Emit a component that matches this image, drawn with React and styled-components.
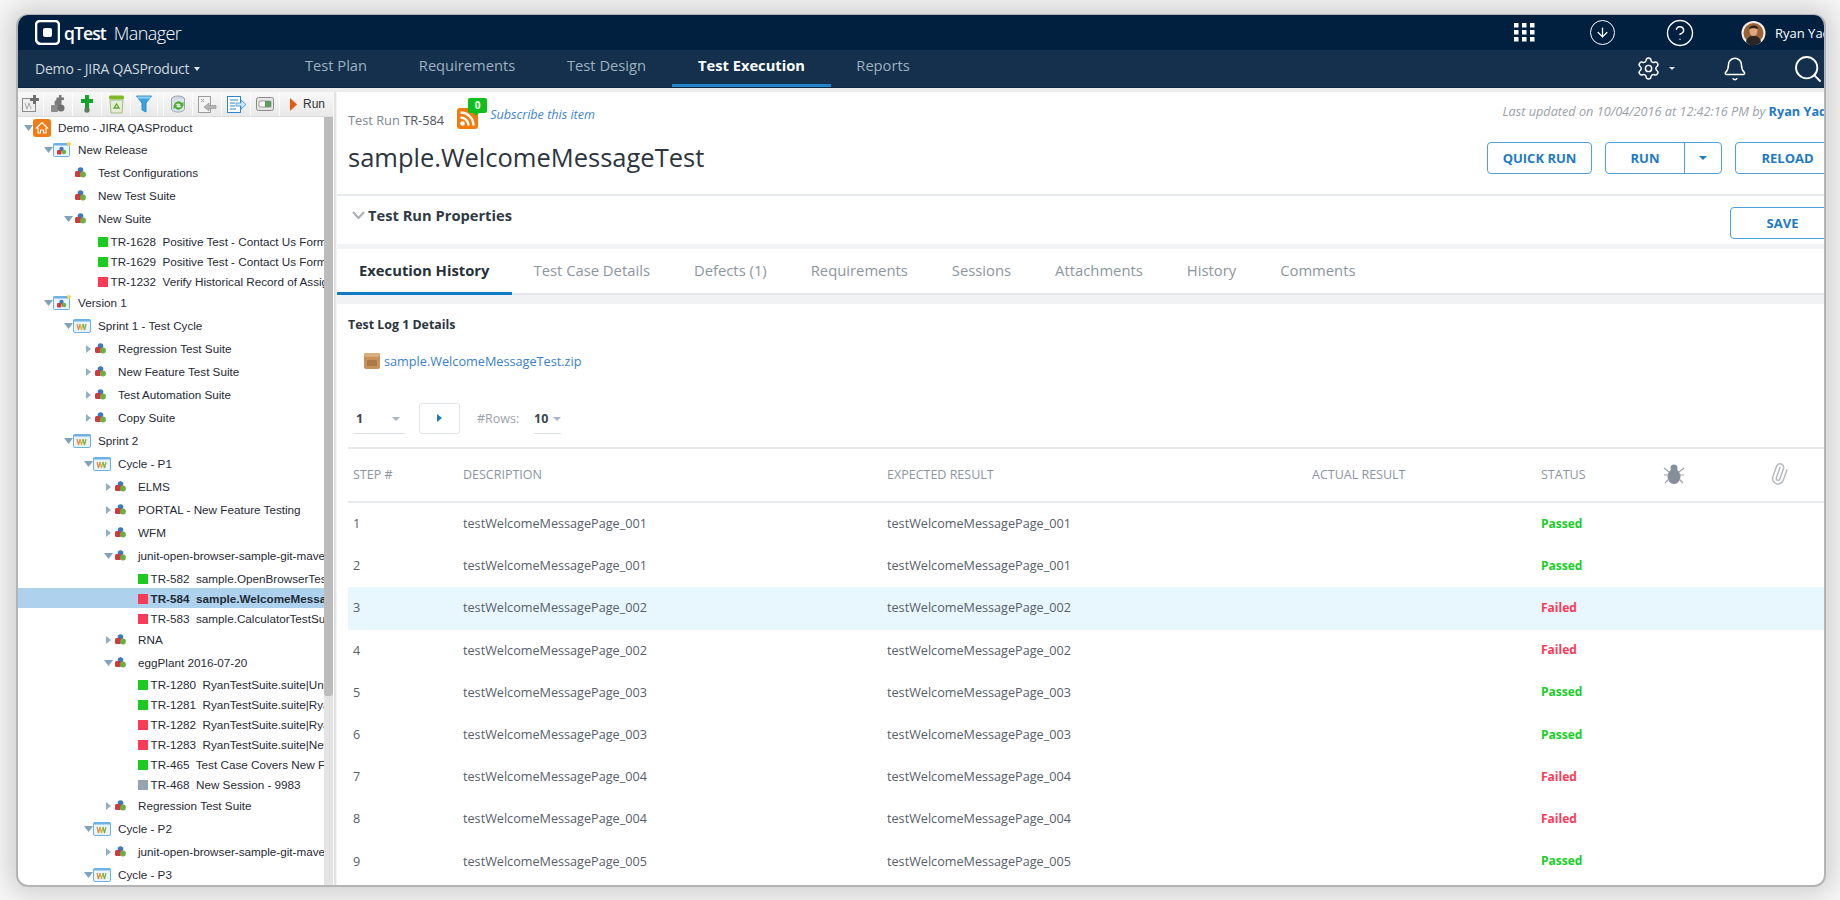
import React from "react";
import styled, { createGlobalStyle } from "styled-components";
import { Settings, Bell, Search, CircleHelp, ArrowDown, Paperclip } from "lucide-react";

const GlobalStyle = createGlobalStyle`
  html, body { margin: 0; padding: 0; background: #fff; }
  * { box-sizing: border-box; }
`;

const OPEN = `"Open Sans", "Liberation Sans", sans-serif`;
const ARIAL = `"Liberation Sans", Arial, sans-serif`;

const Page = styled.div`
  width: 1840px;
  height: 900px;
  padding: 14px 14px 13px 16px;
  overflow: hidden;
  background: #f6f6f6;
  font-family: ${OPEN};
`;

const Frame = styled.div`
  height: 100%;
  display: flex;
  flex-direction: column;
  overflow: hidden;
  background: #fff;
  border: 2px solid #b4b4b4;
  border-top-width: 1px;
  border-radius: 12px;
  box-shadow: 0 0 26px 6px rgba(0, 0, 0, 0.17);
`;

const TopBar = styled.div`
  flex: 0 0 35px;
  display: flex;
  align-items: center;
  padding-left: 17px;
  background: #011f3f;
  color: #fff;
`;

const Brand = styled.div`
  flex: 0 0 1479px;
  display: flex;
  align-items: center;
`;

const BrandName = styled.span`
  margin-left: 4px;
  font-size: 17.5px;
  font-weight: 600;
  letter-spacing: -0.9px;
`;

const BrandProduct = styled.span`
  margin-left: 8px;
  font-size: 18px;
  font-weight: 300;
  letter-spacing: -0.6px;
`;

const TopIcons = styled.div`
  display: flex;
  align-items: center;
`;

const TopIcon = styled.div`
  flex: 0 0 ${(p) => p.$w}px;
  display: flex;
  align-items: center;
  margin-left: ${(p) => p.$ml || 0}px;
`;

const RoundIcon = styled.div`
  width: 25px;
  height: 25px;
  border: 1.5px solid #fff;
  border-radius: 50%;
  display: flex;
  align-items: center;
  justify-content: center;
`;

const UserName = styled.span`
  margin-left: 9px;
  font-size: 13px;
  white-space: nowrap;
`;

const NavBar = styled.div`
  flex: 0 0 38px;
  display: flex;
  align-items: stretch;
  padding-left: 17px;
  background: #14304d;
  border-bottom: 1px solid #0d2842;
`;

const ProjectPicker = styled.div`
  flex: 0 0 236px;
  display: flex;
  align-items: center;
  gap: 5px;
  font-size: 14px;
  letter-spacing: -0.2px;
  color: #cdd6de;
`;

const Caret = styled.span`
  display: inline-block;
  width: 0;
  height: 0;
  border-left: ${(p) => p.$size || 3.5}px solid transparent;
  border-right: ${(p) => p.$size || 3.5}px solid transparent;
  border-top: ${(p) => p.$size || 4}px solid ${(p) => p.$color || "#dfe5ea"};
`;

const NavLink = styled.div`
  flex: 0 0 ${(p) => p.$w}px;
  display: flex;
  align-items: center;
  justify-content: center;
  padding: 0 0 5px ${(p) => p.$shift || 0}px;
  font-size: 14.7px;
  font-weight: ${(p) => (p.$active ? 700 : 400)};
  color: ${(p) => (p.$active ? "#fff" : "#9fb0bf")};
  border-bottom: 3px solid ${(p) => (p.$active ? "#2183c9" : "transparent")};
`;

const NavRight = styled.div`
  margin-left: auto;
  flex: 0 0 188px;
  display: flex;
  align-items: center;
  color: #fff;
  overflow: hidden;
`;

const NavGap = styled.span`
  flex: 0 0 ${(p) => p.$w}px;
`;

const NavSearch = styled(Search)`
  flex-shrink: 0;
`;

const Gutter = styled.div`
  flex: 0 0 4px;
  background: #ececec;
`;

const Body = styled.div`
  flex: 1;
  min-height: 0;
  display: flex;
`;

const LeftPanel = styled.div`
  flex: 0 0 315px;
  width: 315px;
  min-width: 0;
  display: flex;
  flex-direction: column;
  min-height: 0;
`;

const Toolbar = styled.div`
  flex: 0 0 25px;
  display: flex;
  background: linear-gradient(#f8f8f8, #e9e9e9);
  border-bottom: 1px solid #dcdcdc;
`;

const ToolButton = styled.div`
  flex: 0 0 ${(p) => p.$w}px;
  display: flex;
  align-items: center;
  justify-content: center;
  gap: 6px;
  margin-left: ${(p) => p.$gap || 0}px;
  border-right: 1px solid #fcfcfc;
  border-left: ${(p) => (p.$gap ? "1px solid #fcfcfc" : "0")};
  font: 12px ${ARIAL};
  color: #333;
`;

const RunButton = styled(ToolButton)`
  justify-content: flex-start;
  padding-left: 10px;
  border-right: 0;
`;

const TreeArea = styled.div`
  flex: 1;
  min-height: 0;
  display: flex;
`;

const Tree = styled.div`
  flex: 1;
  min-width: 0;
  overflow: hidden;
`;

const TreeRow = styled.div`
  height: ${(p) => p.$h}px;
  margin-top: ${(p) => p.$mt || 0}px;
  display: flex;
  align-items: center;
  padding-left: ${(p) => 5 + p.$depth * 20}px;
  background: ${(p) => (p.$selected ? "#aed2ee" : "transparent")};
  font: ${(p) => (p.$selected ? 700 : 400)} 11.7px ${ARIAL};
  color: #1f2a36;
  white-space: pre;
  overflow: hidden;
`;

const TwistySlot = styled.span`
  flex: 0 0 10px;
  display: flex;
  justify-content: center;
`;

const IconSlot = styled.span`
  flex: 0 0 25px;
  display: flex;
  align-items: center;
  padding-left: ${(p) => p.$pad || 0}px;
`;

const StatusDot = styled.span`
  flex: 0 0 10px;
  height: 10px;
  margin-right: 2.5px;
  margin-top: 1px;
  background: ${(p) => p.$color};
`;

const ScrollTrack = styled.div`
  flex: 0 0 9px;
  background: #e4e4e4;
`;

const ScrollThumb = styled.div`
  height: 579px;
  background: #bcbcbc;
  border-radius: 0 0 3px 3px;
`;

const Splitter = styled.div`
  flex: 0 0 4px;
  background: #e2e2e2;
  border-left: 1px solid #fafafa;
  border-right: 1px solid #f2f2f2;
`;

const Main = styled.div`
  flex: 1;
  min-width: 0;
  overflow: hidden;
`;

const MainInner = styled.div`
  width: 1520px;
`;

const ItemHeader = styled.div`
  height: 104px;
  padding: 11px 0 0 11px;
  border-bottom: 2px solid #e6eaee;
`;

const MetaRow = styled.div`
  display: flex;
  justify-content: space-between;
  height: 36px;
  padding-right: 15px;
`;

const MetaLeft = styled.div`
  display: flex;
  align-items: flex-start;
  padding-top: 9px;
  font-size: 12.8px;
  line-height: 17px;
  color: #7d8791;
`;

const RunId = styled.span`
  color: #4d5661;
`;

const RssWrap = styled.span`
  position: relative;
  width: 21px;
  height: 21px;
  margin: -4px 0 0 13px;
`;

const CountBadge = styled.span`
  position: absolute;
  left: 11px;
  top: -10px;
  width: 19px;
  height: 15px;
  border-radius: 2px;
  background: #0fc01c;
  color: #fff;
  font-size: 10px;
  font-weight: 700;
  line-height: 15px;
  text-align: center;
  &::after {
    content: "";
    position: absolute;
    left: 5px;
    bottom: -3px;
    border-left: 3px solid transparent;
    border-right: 3px solid transparent;
    border-top: 3px solid #0fc01c;
  }
`;

const Subscribe = styled.span`
  margin: -6px 0 0 12px;
  font-size: 12.6px;
  font-style: italic;
  color: #3f86cf;
`;

const Updated = styled.div`
  font-size: 12.7px;
  line-height: 17px;
  font-style: italic;
  color: #9aa1a8;
  white-space: nowrap;
  b {
    color: #1f7ac4;
    font-style: normal;
    font-weight: 700;
  }
`;

const TitleRow = styled.div`
  display: flex;
  justify-content: space-between;
  align-items: flex-start;
  padding-right: 17px;
`;

const Title = styled.h1`
  margin: 1px 0 0;
  font-size: 25.5px;
  font-weight: 400;
  line-height: 34px;
  color: #2c3540;
`;

const Actions = styled.div`
  display: flex;
  gap: 13px;
  margin-top: 3px;
`;

const OutlineButton = styled.div`
  flex: 0 0 ${(p) => p.$w}px;
  height: 32px;
  display: flex;
  align-items: center;
  justify-content: center;
  border: 1px solid #4f9fdb;
  border-radius: 4px;
  background: #fff;
  color: #1f7ac4;
  font-size: 13px;
  font-weight: 700;
`;

const SplitPart = styled.span`
  flex: 0 0 ${(p) => p.$w}px;
  height: 100%;
  display: flex;
  align-items: center;
  justify-content: center;
  border-left: ${(p) => (p.$line ? "1px solid #4f9fdb" : "0")};
`;

const Props = styled.div`
  height: 48px;
  display: flex;
  justify-content: space-between;
  padding: 11px 22px 0 15px;
`;

const PropsTitle = styled.div`
  display: flex;
  align-items: center;
  height: 16px;
  gap: 3px;
  font-size: 14.7px;
  font-weight: 700;
  color: #303a45;
`;

const Band = styled.div`
  height: ${(p) => p.$h}px;
  background: #f1f2f3;
`;

const Tabs = styled.div`
  height: 46px;
  display: flex;
  border-bottom: 2px solid #e3e8ec;
`;

const Tab = styled.div`
  height: 46px;
  display: flex;
  align-items: center;
  padding: 0 22px 1px;
  border-bottom: 3px solid ${(p) => (p.$active ? "#1279c5" : "transparent")};
  font-size: 14.8px;
  font-weight: ${(p) => (p.$active ? 700 : 400)};
  color: ${(p) => (p.$active ? "#26313c" : "#8b96a1")};
`;

const LogBody = styled.div`
  padding: 12px 0 0 11px;
`;

const LogTitle = styled.div`
  font-size: 12.4px;
  line-height: 18px;
  font-weight: 700;
  color: #2b3540;
`;

const Attachment = styled.div`
  display: flex;
  align-items: center;
  gap: 4px;
  margin: 18px 0 0 16px;
  height: 18px;
  font-size: 12.7px;
  color: #3b7fc9;
`;

const Pager = styled.div`
  display: flex;
  align-items: center;
  height: 32px;
  margin: 32px 0 0 5px;
`;

const PageSelect = styled.div`
  flex: 0 0 ${(p) => p.$w}px;
  height: 30px;
  margin-top: 2px;
  display: flex;
  align-items: center;
  justify-content: space-between;
  padding: 0 ${(p) => p.$pr}px 0 ${(p) => p.$pl}px;
  border-bottom: 1px solid #dde2e7;
  font-size: 12.5px;
  font-weight: 700;
  color: #3a4450;
`;

const NextButton = styled.div`
  flex: 0 0 41px;
  height: 31px;
  margin-left: 14px;
  display: flex;
  align-items: center;
  justify-content: center;
  border: 1px solid #dfe4e9;
  border-radius: 3px;
`;

const RowsLabel = styled.span`
  flex: 0 0 57px;
  margin-left: 17px;
  font-size: 12.5px;
  color: #9aa3ac;
`;

const TableHead = styled.div`
  display: grid;
  grid-template-columns: 110px 424px 425px 229px 83px 100px 109px;
  align-items: center;
  height: 56px;
  margin-top: 13px;
  padding: 0 0 2px 5px;
  border-top: 2px solid #e6eaee;
  border-bottom: 2px solid #e6eaee;
  font-size: 12.5px;
  color: #8a96a3;
`;

const TableRow = styled.div`
  display: grid;
  grid-template-columns: 110px 424px 425px 229px 83px 100px 109px;
  align-items: center;
  height: 42.2px;
  padding: 0 0 2px 5px;
  background: ${(p) => (p.$highlight ? "#e8f6fd" : "transparent")};
  font-size: 12.65px;
  color: #56606b;
`;

const StatusText = styled.span`
  font-size: 12px;
  font-weight: 700;
  color: ${(p) => (p.$failed ? "#fb3a57" : "#16cf25")};
`;

const HeadIcon = styled.span`
  display: flex;
  justify-content: center;
  color: #8a949e;
`;

const ClipIcon = styled(Paperclip)`
  transform: rotate(-25deg);
`;

const LogoIcon = () => (
  <svg width="25" height="25" viewBox="0 0 25 25">
    <path d="M5 1h15a4 4 0 0 1 4 4v15a4 4 0 0 1-4 4H6a5 5 0 0 1-5-5V5a4 4 0 0 1 4-4z" fill="none" stroke="#fff" strokeWidth="2.6" />
    <rect x="8" y="8" width="9" height="9" rx="2" fill="#fff" />
  </svg>
);

const GridIcon = () => (
  <svg width="21" height="19" viewBox="0 0 21 19" fill="#fff">
    {[0, 8, 16].map((x) =>
      [0, 7, 14].map((y) => <rect key={`${x}-${y}`} x={x} y={y} width="4.5" height="4.5" />)
    )}
  </svg>
);

const Avatar = () => (
  <svg width="25" height="26" viewBox="0 0 25 26">
    <circle cx="12.5" cy="13" r="12" fill="#f4efe9" />
    <circle cx="12.5" cy="13" r="10" fill="#9b6236" />
    <path d="M5 22c1-5 4-6 7.500-6s6.500 1 7.500 6a10 10 0 0 1-15 0z" fill="#2a2624" />
    <ellipse cx="12.500" cy="11" rx="4" ry="5" fill="#dca783" />
    <path d="M8 9c0-4 9-5 9 0-2-1-7-1-9 0z" fill="#2c211b" />
  </svg>
);

const Twisty = ({ open }) =>
  open ? (
    <svg width="9" height="6" viewBox="0 0 9 6"><path d="M0 0h9L4.500 6z" fill="#7fa3bd" /></svg>
  ) : (
    <svg width="5" height="8" viewBox="0 0 5 8"><path d="M0 0l5 4-5 4z" fill="#8fb0c6" /></svg>
  );

const HomeIcon = () => (
  <svg width="18" height="18" viewBox="0 0 18 18">
    <rect width="18" height="18" rx="3" fill="#ee7d16" />
    <path d="M9 3.500L3.500 9H5v5h2.500v-3h3v3H13V9h1.500z" fill="none" stroke="#fff" strokeWidth="1.1" />
  </svg>
);

const SuiteIcon = () => (
  <svg width="11" height="11" viewBox="0 0 11 11">
    <circle cx="5.500" cy="3" r="2.800" fill="#3d79bb" />
    <rect x="0" y="4" width="6" height="6" rx="1.500" fill="#cf3a40" />
    <circle cx="8" cy="7.500" r="2.900" fill="#6bb043" />
  </svg>
);

const ReleaseIcon = () => (
  <svg width="18" height="15" viewBox="0 0 18 15">
    <rect x="0.500" y="1.500" width="16" height="13" rx="1" fill="#eaf4fc" stroke="#6db2e6" />
    <rect x="0.500" y="1.500" width="16" height="2" fill="#6db2e6" />
    <circle cx="8.500" cy="7" r="2.200" fill="#3d79bb" />
    <rect x="4" y="8" width="4.500" height="4.500" rx="1" fill="#cf3a40" />
    <circle cx="11" cy="10" r="2.300" fill="#6bb043" />
    <circle cx="16" cy="2" r="2" fill="#f2d64b" />
  </svg>
);

const CycleIcon = () => (
  <svg width="18" height="14" viewBox="0 0 18 14">
    <rect x="0.500" y="0.500" width="17" height="13" rx="1.500" fill="#eaf4fc" stroke="#6db2e6" />
    <rect x="0.500" y="0.500" width="17" height="2" fill="#6db2e6" />
    <path d="M4 5l1.500 6L7 5" fill="none" stroke="#e2894d" strokeWidth="1.200" />
    <path d="M7 5l1.500 6L10 5" fill="none" stroke="#d8b340" strokeWidth="1.200" />
    <path d="M10 5l1.500 6L13 5" fill="none" stroke="#74b24c" strokeWidth="1.200" />
  </svg>
);

const ToolCycle = () => (
  <svg width="17" height="18" viewBox="0 0 17 18">
    <rect x="0.500" y="3.500" width="13" height="13" fill="#eee" stroke="#8c8c8c" />
    <path d="M3 8l2 6 2-6 2 6" fill="none" stroke="#aaa" />
    <path d="M11 0h3v3h3v3h-3v3h-3V6H8V3h3z" fill="#6f6f6f" />
  </svg>
);

const ToolSuite = () => (
  <svg width="16" height="18" viewBox="0 0 16 18">
    <circle cx="8" cy="8" r="3.500" fill="#7b7b7b" />
    <rect x="1" y="10" width="7" height="7" rx="1" fill="#8b8b8b" />
    <circle cx="11" cy="13" r="3.500" fill="#6f6f6f" />
    <path d="M9 0h2.500v2.500H14V5h-2.500v2.500H9V5H6.500V2.500H9z" fill="#777" />
  </svg>
);

const ToolAdd = () => (
  <svg width="12" height="18" viewBox="0 0 12 18">
    <path d="M4 0h4v4h4v4H8v5H4V8H0V4h4z" fill="#11a52a" />
    <circle cx="6" cy="15" r="2.700" fill="#5c7d5f" />
  </svg>
);

const ToolTrash = () => (
  <svg width="17" height="19" viewBox="0 0 17 19">
    <rect x="1" y="0.500" width="15" height="4" rx="1.500" fill="#7dbb22" />
    <path d="M2 5h13l-1 13H3z" fill="#e4efd3" stroke="#a3b98a" />
    <path d="M6 13l2.500-4 2.500 4z" fill="none" stroke="#63a63a" strokeWidth="1.300" />
  </svg>
);

const ToolFilter = () => (
  <svg width="16" height="18" viewBox="0 0 16 18">
    <path d="M0.500 1h15l-5.500 7v9l-4-2V8z" fill="#3aa3e3" stroke="#1d7fc2" strokeWidth="0.800" />
    <rect x="1.500" y="1.500" width="13" height="2" fill="#8fd0f3" />
  </svg>
);

const ToolSync = () => (
  <svg width="17" height="18" viewBox="0 0 17 18">
    <ellipse cx="8" cy="4" rx="6.500" ry="3" fill="#cfd9e2" stroke="#96a4b1" />
    <path d="M1.500 4v10c0 1.700 3 3 6.500 3s6.500-1.300 6.500-3V4" fill="#dbe3ea" stroke="#96a4b1" />
    <path d="M4 10a4.500 4.500 0 0 1 8-2l1.500-1v4h-4l1.300-1A3 3 0 0 0 5.500 10zM13 11a4.500 4.500 0 0 1-8 2l-1.500 1v-4h4l-1.300 1a3 3 0 0 0 5.300 0z" fill="#4caf2c" />
  </svg>
);

const ToolImport = () => (
  <svg width="19" height="17" viewBox="0 0 19 17">
    <rect x="0.500" y="0.500" width="12" height="16" fill="#f4f4f4" stroke="#9c9c9c" />
    <path d="M3 3l3 3M6 3L3 6" stroke="#9c9c9c" />
    <path d="M18 9.500h-7V7l-5 4 5 4v-2.500h7z" fill="#b5b5b5" stroke="#8c8c8c" strokeWidth="0.600" />
  </svg>
);

const ToolExport = () => (
  <svg width="19" height="17" viewBox="0 0 19 17">
    <rect x="0.500" y="0.500" width="13" height="16" fill="#fff" stroke="#2d86c8" />
    <path d="M3 4h8M3 7h5M3 10h5M3 13h6" stroke="#2d86c8" />
    <path d="M9 7h5V4l5 4.500-5 4.500v-3H9z" fill="#cfe6f6" stroke="#2d86c8" strokeWidth="0.700" />
  </svg>
);

const ToolToggle = () => (
  <svg width="18" height="14" viewBox="0 0 18 14">
    <rect x="0.500" y="0.500" width="17" height="13" rx="2" fill="#e6e6e6" stroke="#8a8a8a" />
    <rect x="3" y="4" width="12" height="6" rx="1" fill="#fff" stroke="#9a9a9a" />
    <rect x="9" y="4" width="6" height="6" fill="#5f9e5a" />
  </svg>
);

const RssIcon = () => (
  <svg width="21" height="21" viewBox="0 0 21 21">
    <rect width="21" height="21" rx="3" fill="#f47a0c" />
    <circle cx="5.500" cy="15.500" r="2.300" fill="#fff" />
    <path d="M3.500 9.500a8 8 0 0 1 8 8M3.500 4.500a13 13 0 0 1 13 13" fill="none" stroke="#fff" strokeWidth="2.400" />
  </svg>
);

const BoxIcon = () => (
  <svg width="16" height="16" viewBox="0 0 16 16">
    <rect width="16" height="16" rx="2" fill="#c8935a" />
    <rect x="0" y="0" width="16" height="4" rx="2" fill="#d9ad7a" />
    <path d="M4 7v6M6 7v6M8 7v6M10 7v6M12 7v6" stroke="#8f6136" />
  </svg>
);

const BugIcon = () => (
  <svg width="22" height="22" viewBox="0 0 22 22" fill="#858f99">
    <circle cx="11" cy="5" r="3.500" />
    <ellipse cx="11" cy="13.500" rx="6.500" ry="7.500" />
    <path d="M1 5l5 4M21 5l-5 4M1 12h5M21 12h-5M2 20l4-4M20 20l-4-4" stroke="#9aa3ab" strokeWidth="1.200" fill="none" />
  </svg>
);

const ChevronDown = () => (
  <svg width="13" height="8" viewBox="0 0 13 8">
    <path d="M1 1l5.500 6L12 1" fill="none" stroke="#aab2ba" strokeWidth="2.200" />
  </svg>
);

const PlayIcon = () => (
  <svg width="7" height="13" viewBox="0 0 7 13"><path d="M0 0l7 6.500L0 13z" fill="#e8590c" /></svg>
);

const NextIcon = () => (
  <svg width="5" height="8" viewBox="0 0 5 8"><path d="M0 0l5 4-5 4z" fill="#1f7ac4" /></svg>
);

const TREE = [
  { kind: "home", depth: 0, open: true, label: "Demo - JIRA QASProduct" },
  { kind: "release", depth: 1, open: true, label: "New Release" },
  { kind: "suite", depth: 2, label: "Test Configurations" },
  { kind: "suite", depth: 2, label: "New Test Suite" },
  { kind: "suite", depth: 2, open: true, label: "New Suite" },
  { kind: "test", depth: 2, status: "pass", mt: 1, id: "TR-1628", label: "Positive Test - Contact Us Form" },
  { kind: "test", depth: 2, status: "pass", id: "TR-1629", label: "Positive Test - Contact Us Form" },
  { kind: "test", depth: 2, status: "fail", id: "TR-1232", label: "Verify Historical Record of Assignment" },
  { kind: "release", depth: 1, open: true, label: "Version 1" },
  { kind: "cycle", depth: 2, open: true, label: "Sprint 1 - Test Cycle" },
  { kind: "suite", depth: 3, closed: true, label: "Regression Test Suite" },
  { kind: "suite", depth: 3, closed: true, label: "New Feature Test Suite" },
  { kind: "suite", depth: 3, closed: true, label: "Test Automation Suite" },
  { kind: "suite", depth: 3, closed: true, label: "Copy Suite" },
  { kind: "cycle", depth: 2, open: true, label: "Sprint 2" },
  { kind: "cycle", depth: 3, open: true, label: "Cycle - P1" },
  { kind: "suite", depth: 4, closed: true, label: "ELMS" },
  { kind: "suite", depth: 4, closed: true, label: "PORTAL - New Feature Testing" },
  { kind: "suite", depth: 4, closed: true, label: "WFM" },
  { kind: "suite", depth: 4, open: true, label: "junit-open-browser-sample-git-maven" },
  { kind: "test", depth: 4, status: "pass", mt: 1, id: "TR-582", label: "sample.OpenBrowserTestSuite" },
  { kind: "test", depth: 4, status: "fail", selected: true, id: "TR-584", label: "sample.WelcomeMessageTest" },
  { kind: "test", depth: 4, status: "fail", id: "TR-583", label: "sample.CalculatorTestSuite" },
  { kind: "suite", depth: 4, closed: true, label: "RNA" },
  { kind: "suite", depth: 4, open: true, label: "eggPlant 2016-07-20" },
  { kind: "test", depth: 4, status: "pass", id: "TR-1280", label: "RyanTestSuite.suite|Untitled" },
  { kind: "test", depth: 4, status: "pass", id: "TR-1281", label: "RyanTestSuite.suite|RyanTest" },
  { kind: "test", depth: 4, status: "fail", id: "TR-1282", label: "RyanTestSuite.suite|RyanTest" },
  { kind: "test", depth: 4, status: "fail", id: "TR-1283", label: "RyanTestSuite.suite|NewTest" },
  { kind: "test", depth: 4, status: "pass", id: "TR-465", label: "Test Case Covers New Feature" },
  { kind: "test", depth: 4, status: "none", id: "TR-468", label: "New Session - 9983" },
  { kind: "suite", depth: 4, closed: true, label: "Regression Test Suite" },
  { kind: "cycle", depth: 3, open: true, label: "Cycle - P2" },
  { kind: "suite", depth: 4, closed: true, label: "junit-open-browser-sample-git-maven" },
  { kind: "cycle", depth: 3, open: true, label: "Cycle - P3" },
];

const STATUS_COLORS = { pass: "#1bcb1f", fail: "#fb3a57", none: "#97a3af" };

const TREE_ICONS = {
  home: { Icon: HomeIcon, pad: 0 },
  release: { Icon: ReleaseIcon, pad: 0 },
  cycle: { Icon: CycleIcon, pad: 0 },
  suite: { Icon: SuiteIcon, pad: 2 },
};

const STEPS = [
  ["testWelcomeMessagePage_001", "Passed"],
  ["testWelcomeMessagePage_001", "Passed"],
  ["testWelcomeMessagePage_002", "Failed"],
  ["testWelcomeMessagePage_002", "Failed"],
  ["testWelcomeMessagePage_003", "Passed"],
  ["testWelcomeMessagePage_003", "Passed"],
  ["testWelcomeMessagePage_004", "Failed"],
  ["testWelcomeMessagePage_004", "Failed"],
  ["testWelcomeMessagePage_005", "Passed"],
];

const TAB_NAMES = [
  "Execution History",
  "Test Case Details",
  "Defects (1)",
  "Requirements",
  "Sessions",
  "Attachments",
  "History",
  "Comments",
];

const NAV_LINKS = [
  { label: "Test Plan", w: 130 },
  { label: "Requirements", w: 132 },
  { label: "Test Design", w: 139, shift: 8 },
  { label: "Test Execution", w: 159, active: true },
  { label: "Reports", w: 104 },
];

const TreeItem = ({ item }) => {
  if (item.kind === "test") {
    return (
      <TreeRow $h={20} $mt={item.mt} $depth={item.depth} $selected={item.selected}>
        <TwistySlot />
        <IconSlot />
        <StatusDot $color={STATUS_COLORS[item.status]} />
        {item.id}  {item.label}
      </TreeRow>
    );
  }
  const { Icon, pad } = TREE_ICONS[item.kind];
  return (
    <TreeRow $h={item.kind === "home" ? 21 : 23} $depth={item.depth}>
      <TwistySlot>
        {item.open && <Twisty open />}
        {item.closed && <Twisty />}
      </TwistySlot>
      <IconSlot $pad={pad}>
        <Icon />
      </IconSlot>
      {item.label}
    </TreeRow>
  );
};

export default function App() {
  return (
    <Page>
      <GlobalStyle />
      <Frame>
        <TopBar>
          <Brand>
            <LogoIcon />
            <BrandName>qTest</BrandName>
            <BrandProduct>Manager</BrandProduct>
          </Brand>
          <TopIcons>
            <TopIcon $w={76}><GridIcon /></TopIcon>
            <TopIcon $w={77}>
              <RoundIcon><ArrowDown size={15} color="#fff" strokeWidth={2} /></RoundIcon>
            </TopIcon>
            <TopIcon $w={74} $ml={-2}><CircleHelp size={30} color="#fff" strokeWidth={1.1} /></TopIcon>
            <TopIcon $w={90} $ml={2}>
              <Avatar />
              <UserName>Ryan Yadav</UserName>
            </TopIcon>
          </TopIcons>
        </TopBar>
        <NavBar>
          <ProjectPicker>
            Demo - JIRA QASProduct <Caret />
          </ProjectPicker>
          {NAV_LINKS.map((link) => (
            <NavLink key={link.label} $w={link.w} $shift={link.shift} $active={link.active}>{link.label}</NavLink>
          ))}
          <NavRight>
            <Settings size={31} strokeWidth={1.4} />
            <NavGap $w={8} />
            <Caret $size={3.5} />
            <NavGap $w={47} />
            <Bell size={32} strokeWidth={1.4} />
            <NavGap $w={44} />
            <NavSearch size={32} strokeWidth={1.4} />
          </NavRight>
        </NavBar>
        <Gutter />
        <Body>
          <LeftPanel>
            <Toolbar>
              <ToolButton $w={26}><ToolCycle /></ToolButton>
              <ToolButton $w={29}><ToolSuite /></ToolButton>
              <ToolButton $w={29}><ToolAdd /></ToolButton>
              <ToolButton $w={29}><ToolTrash /></ToolButton>
              <ToolButton $w={27}><ToolFilter /></ToolButton>
              <ToolButton $w={30} $gap={5}><ToolSync /></ToolButton>
              <ToolButton $w={29}><ToolImport /></ToolButton>
              <ToolButton $w={29}><ToolExport /></ToolButton>
              <ToolButton $w={29}><ToolToggle /></ToolButton>
              <RunButton $w={44}><PlayIcon />Run</RunButton>
            </Toolbar>
            <TreeArea>
              <Tree>
                {TREE.map((item, i) => <TreeItem key={i} item={item} />)}
              </Tree>
              <ScrollTrack><ScrollThumb /></ScrollTrack>
            </TreeArea>
          </LeftPanel>
          <Splitter />
          <Main>
            <MainInner>
              <ItemHeader>
                <MetaRow>
                  <MetaLeft>
                    Test Run&nbsp;<RunId>TR-584</RunId>
                    <RssWrap>
                      <RssIcon />
                      <CountBadge>0</CountBadge>
                    </RssWrap>
                    <Subscribe>Subscribe this item</Subscribe>
                  </MetaLeft>
                  <Updated>
                    Last updated on 10/04/2016 at 12:42:16 PM by <b>Ryan Yadav</b>
                  </Updated>
                </MetaRow>
                <TitleRow>
                  <Title>sample.WelcomeMessageTest</Title>
                  <Actions>
                    <OutlineButton $w={105}>QUICK RUN</OutlineButton>
                    <OutlineButton $w={115}>
                      <SplitPart $w={78}>RUN</SplitPart>
                      <SplitPart $w={37} $line><Caret $size={4} $color="#1f7ac4" /></SplitPart>
                    </OutlineButton>
                    <OutlineButton $w={105}>RELOAD</OutlineButton>
                  </Actions>
                </TitleRow>
              </ItemHeader>
              <Props>
                <PropsTitle><ChevronDown />Test Run Properties</PropsTitle>
                <OutlineButton $w={105}>SAVE</OutlineButton>
              </Props>
              <Band $h={5} />
              <Tabs>
                {TAB_NAMES.map((name, i) => (
                  <Tab key={name} $active={i === 0}>{name}</Tab>
                ))}
              </Tabs>
              <Band $h={9} />
              <LogBody>
                <LogTitle>Test Log 1 Details</LogTitle>
                <Attachment><BoxIcon />sample.WelcomeMessageTest.zip</Attachment>
                <Pager>
                  <PageSelect $w={52} $pl={3} $pr={5}>1<Caret $size={4} $color="#a9b6c6" /></PageSelect>
                  <NextButton><NextIcon /></NextButton>
                  <RowsLabel>#Rows:</RowsLabel>
                  <PageSelect $w={27} $pl={0} $pr={0}>10<Caret $size={4} $color="#a9b6c6" /></PageSelect>
                </Pager>
                <TableHead>
                  <span>STEP #</span>
                  <span>DESCRIPTION</span>
                  <span>EXPECTED RESULT</span>
                  <span>ACTUAL RESULT</span>
                  <span>STATUS</span>
                  <HeadIcon><BugIcon /></HeadIcon>
                  <HeadIcon><ClipIcon size={22} color="#b3b9bf" strokeWidth={1.6} /></HeadIcon>
                </TableHead>
                {STEPS.map(([name, status], i) => (
                  <TableRow key={i} $highlight={i === 2}>
                    <span>{i + 1}</span>
                    <span>{name}</span>
                    <span>{name}</span>
                    <span />
                    <StatusText $failed={status === "Failed"}>{status}</StatusText>
                  </TableRow>
                ))}
              </LogBody>
            </MainInner>
          </Main>
        </Body>
      </Frame>
    </Page>
  );
}
